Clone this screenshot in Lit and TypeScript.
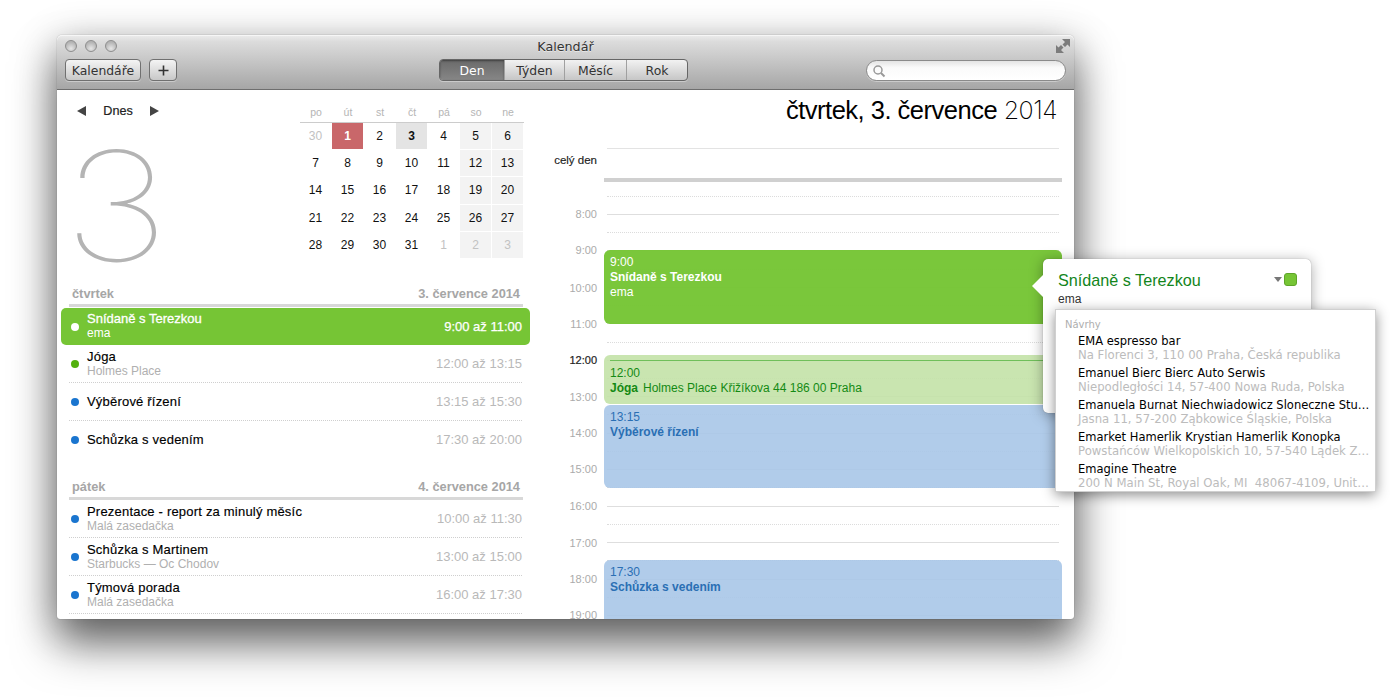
import { LitElement, html, css } from "lit";
import { customElement } from "lit/decorators.js";

const week = ["po", "út", "st", "čt", "pá", "so", "ne"];
const days: [string, string][] = [
  ["30", "out"], ["1", "today"], ["2", ""], ["3", "sel"], ["4", ""], ["5", "we"], ["6", "we"],
  ["7", ""], ["8", ""], ["9", ""], ["10", ""], ["11", ""], ["12", "we"], ["13", "we"],
  ["14", ""], ["15", ""], ["16", ""], ["17", ""], ["18", ""], ["19", "we"], ["20", "we"],
  ["21", ""], ["22", ""], ["23", ""], ["24", ""], ["25", ""], ["26", "we"], ["27", "we"],
  ["28", ""], ["29", ""], ["30", ""], ["31", ""], ["1", "out"], ["2", "we out"], ["3", "we out"],
];

type Row = { t: string; s?: string; time: string; c: string; sel?: boolean; nol?: boolean };
const day1: Row[] = [
  { t: "Snídaně s Terezkou", s: "ema", time: "9:00 až 11:00", c: "w", sel: true },
  { t: "Jóga", s: "Holmes Place", time: "12:00 až 13:15", c: "g" },
  { t: "Výběrové řízení", time: "13:15 až 15:30", c: "b" },
  { t: "Schůzka s vedením", time: "17:30 až 20:00", c: "b", nol: true },
];
const day2: Row[] = [
  { t: "Prezentace - report za minulý měsíc", s: "Malá zasedačka", time: "10:00 až 11:30", c: "b" },
  { t: "Schůzka s Martinem", s: "Starbucks — Oc Chodov", time: "13:00 až 15:00", c: "b" },
  { t: "Týmová porada", s: "Malá zasedačka", time: "16:00 až 17:30", c: "b" },
];

const hourLabels = ["8:00", "9:00", "10:00", "11:00", "12:00", "13:00", "14:00", "15:00", "16:00", "17:00", "18:00", "19:00"];
const labelY = [214, 250, 288, 324, 360, 397, 433, 469, 506, 543, 579, 615];
const TOP = 182;
const PH = 36.45;
const lineY = (h: number) => Math.round(214 + (h - 8) * PH);

const suggestions = [
  ["EMA espresso bar", "Na Florenci 3, 110 00 Praha, Česká republika"],
  ["Emanuel Bierc Bierc Auto Serwis", "Niepodległości 14, 57-400 Nowa Ruda, Polska"],
  ["Emanuela Burnat Niechwiadowicz Sloneczne Stu…", "Jasna 11, 57-200 Ząbkowice Śląskie, Polska"],
  ["Emarket Hamerlik Krystian Hamerlik Konopka", "Powstańców Wielkopolskich 10, 57-540 Lądek Z…"],
  ["Emagine Theatre", "200 N Main St, Royal Oak, MI  48067-4109, Unit…"],
];

@customElement("app-root")
export class AppRoot extends LitElement {
  static styles = css`
    :host { display: block; width: 1390px; height: 698px; padding: 35px 0 0 57px; box-sizing: border-box; background: #fff; overflow: hidden; font-family: "Liberation Sans", Arial, sans-serif; }
    .win { position: relative; width: 1017px; height: 584px; border-radius: 5px 5px 3px 3px; background: #fff; box-shadow: 0 26px 44px rgba(0,0,0,.5), 0 8px 40px rgba(0,0,0,.3), 0 0 1px rgba(0,0,0,.5); display: flex; flex-direction: column; }
    .bar { height: 55px; box-sizing: border-box; flex: none; border-radius: 5px 5px 0 0; background: linear-gradient(#ececec, #dcdcdc 12%, #a6a6a6); border-bottom: 1px solid #6e6e6e; box-shadow: inset 0 1px 0 #f6f6f6; font-family: "DejaVu Sans", sans-serif; color: #333; }
    .tr { height: 24px; position: relative; display: flex; align-items: center; justify-content: center; color: #333; box-sizing: border-box; padding-bottom: 2px; }
    .title { font-size: 12.7px; text-shadow: 0 1px 0 rgba(255,255,255,.5); }
    .lights { position: absolute; left: 8px; top: 5px; display: flex; gap: 8px; }
    .light { width: 12px; height: 12px; border-radius: 50%; box-sizing: border-box; border: 1px solid #8e8e8e; background: radial-gradient(circle at 50% 75%, #e6e6e6, #b4b4b4 70%); }
    .fs { position: absolute; right: 3px; top: 3px; }
    .tools { display: flex; align-items: flex-start; padding-left: 8px; }
    .btn { height: 22px; box-sizing: border-box; border: 1px solid #707070; border-radius: 4px; background: linear-gradient(#f4f4f4, #c8c8c8); box-shadow: 0 1px 0 rgba(255,255,255,.35); display: flex; align-items: center; justify-content: center; font-size: 12.4px; color: #333; }
    .b1 { width: 76px; }
    .b2 { width: 28px; margin-left: 8px; }
    .seg { margin-left: 262px; width: 249px; height: 22px; box-sizing: border-box; border: 1px solid #666; border-radius: 4px; display: flex; background: linear-gradient(#f2f2f2, #c6c6c6); box-shadow: 0 1px 0 rgba(255,255,255,.35); overflow: hidden; }
    .sg { display: flex; align-items: center; justify-content: center; font-size: 12.4px; color: #333; border-left: 1px solid #a0a0a0; box-sizing: border-box; }
    .sg:first-child { border-left: 0; }
    .sg.on { background: linear-gradient(#6a6a6a, #868686); color: #fff; box-shadow: inset 0 1px 2px rgba(0,0,0,.4); }
    .s1 { width: 64px; } .s2 { width: 60px; } .s3 { width: 62px; } .s4 { width: 61px; }
    .search { margin-left: 178px; width: 200px; height: 21px; margin-top: 1px; box-sizing: border-box; border: 1px solid #8a8a8a; border-radius: 11px; background: linear-gradient(#e4e4e4, #fafafa 35%, #fff); display: flex; align-items: center; padding-left: 5px; box-shadow: 0 1px 0 rgba(255,255,255,.35); }

    .main { flex: 1; display: flex; min-height: 0; }
    .left { width: 483px; flex: none; display: flex; flex-direction: column; }
    .top { height: 196px; display: flex; flex: none; }
    .tl { width: 243px; flex: none; }
    .nav { display: flex; align-items: center; height: 12px; margin: 15px 0 0 20px; font-size: 12.6px; color: #222; }
    .nav span { margin: 0 17px 0 17px; width: 30px; text-align: center; -webkit-text-stroke: .2px #222; }
    .big { font-family: Inter, sans-serif; font-weight: 100; font-size: 152px; line-height: 130px; color: #b4b4b4; margin: 24px 0 0 6px; transform: scaleX(1.2); transform-origin: left center; }
    .mini { margin-top: 14px; width: 224px; }
    .mh { display: grid; grid-template-columns: repeat(7, 32px); height: 18px; border-bottom: 1px solid #ccc; }
    .wd { text-align: center; font-size: 10.500px; color: #b5b5b5; line-height: 16px; }
    .mg { display: grid; grid-template-columns: repeat(7, 32px); grid-auto-rows: 27.2px; }
    .d { font-size: 12px; color: #111; display: flex; align-items: center; justify-content: center; margin-right: 1px; margin-bottom: 1px; }
    .d.we { background: #f3f3f3; }
    .d.out { color: #c2c2c2; }
    .d.today { background: #c9676a; color: #fff; font-weight: 700; }
    .d.sel { background: #e4e4e4; font-weight: 700; }

    .ag { padding: 0 0 0 12px; }
    .ah { width: 454px; border-bottom: 3px solid #d8d8d8; display: flex; justify-content: space-between; align-items: flex-end; padding: 0 3px 3px 3px; box-sizing: border-box; font-size: 12.8px; font-weight: 700; color: #a6a6a6; line-height: 14px; height: 21px; }
    .gap { height: 20px; }
    .rows { margin-top: 1px; }
    .rows.r2 { margin-top: 0; }
    .row { height: 38px; box-sizing: border-box; display: grid; grid-template-columns: 18px 1fr auto; align-items: center; width: 453px; border-bottom: 1px dotted #cfcfcf; }
    .row.nol { border-bottom-color: transparent; }
    .row.sel { background: #76c535; border: 0; border-radius: 5px; width: 469px; margin-left: -8px; height: 37px; padding: 0 8px; color: #fff; }
    .sel .tc { margin-top: -2px; }
    .dot { width: 8px; height: 8px; border-radius: 50%; margin-left: 2px; }
    .dot.w { background: #fff; } .dot.g { background: #53b10d; } .dot.b { background: #1a75cf; }
    .t { font-size: 13px; line-height: 15px; color: #000; letter-spacing: .2px; -webkit-text-stroke: .15px #000; }
    .s { font-size: 12px; line-height: 15px; color: #b0b0b0; }
    .tm { font-size: 13px; color: #b9b9b9; }
    .sel .t { color: #fff; -webkit-text-stroke: .3px #fff; letter-spacing: 0; }
    .sel .s { color: #fff; }
    .sel .tm { color: #fff; -webkit-text-stroke: .25px #fff; }

    .right { flex: 1; min-width: 0; display: flex; flex-direction: column; }
    .head { height: 40px; flex: none; text-align: right; padding: 6px 17px 0 0; box-sizing: border-box; font-size: 25.5px; line-height: 28px; color: #000; letter-spacing: -.5px; white-space: nowrap; }
    .head i { font-style: normal; font-family: Inter, sans-serif; font-weight: 200; font-size: 25px; letter-spacing: -.5px; }
    .all { flex: none; margin-top: 18px; height: 30px; position: relative; display: flex; }
    .all label { width: 57px; text-align: right; font-size: 11.500px; color: #222; padding-top: 6px; -webkit-text-stroke: .15px #222; }
    .allline { position: absolute; left: 67px; width: 452px; top: 0; border-top: 1px solid #e3e3e3; }
    .thick { flex: none; margin-left: 64px; width: 458px; height: 4px; background: #d0d0d0; }
    .tg { flex: 1; position: relative; overflow: hidden; border-radius: 0 0 3px 0; }
    .hl { position: absolute; right: 477px; font-size: 11px; line-height: 12px; color: #ababab; }
    .hl.now { color: #222; -webkit-text-stroke: .2px #222; }
    .ln { position: absolute; left: 67px; width: 452px; border-top: 1px solid #dedede; }
    .ln.h { border-top: 1px dotted #dcdcdc; }
    .ev { position: absolute; left: 64px; width: 458px; border-radius: 6px; box-sizing: border-box; padding: 5px 6px; font-size: 12px; line-height: 15px; }
    .ev b { font-weight: 700; }
    .ev.sel { background: rgba(118,197,53,.97); color: #fff; }
    .ev.gr { background: rgba(195,226,167,.9); color: #148a14; }
    .ev.bl { background: rgba(169,199,232,.9); color: #2a6fb4; }
    .nowl { position: absolute; left: 6px; right: 0; top: 5px; border-top: 1px solid #6fbf5a; }
    .ev.gr .tx { padding-top: 6px; }
    .ev.gr em { font-style: normal; margin-left: 5px; }

    .pop { position: absolute; left: 986px; top: 224px; width: 268px; height: 154px; background: #fff; border-radius: 5px; box-shadow: 0 2px 14px rgba(0,0,0,.35), 0 0 1px rgba(0,0,0,.4); }
    .arrow { position: absolute; left: -11px; top: 15px; }
    .pt { position: absolute; left: 15px; top: 11px; font-size: 16.200px; line-height: 20px; color: #13851b; }
    .pe { position: absolute; left: 15px; top: 32px; font-size: 12px; line-height: 16px; color: #333; }
    .pc { position: absolute; left: 231px; top: 18px; width: 0; height: 0; border-left: 4px solid transparent; border-right: 4px solid transparent; border-top: 5px solid #777; }
    .ps { position: absolute; left: 241px; top: 14px; width: 13px; height: 13px; background: #76c535; border: 1px solid #5fa52a; border-radius: 3px; box-sizing: border-box; }
    .menu { position: absolute; left: 12px; top: 50px; width: 321px; height: 183px; background: #fff; box-sizing: border-box; border: 1px solid #d0d0d0; box-shadow: 0 3px 12px rgba(0,0,0,.45); padding: 9px 0 0 9px; font-family: "DejaVu Sans", sans-serif; white-space: nowrap; }
    .mt { font-size: 10px; line-height: 12px; color: #aeaeae; margin-bottom: 3px; }
    .mi { padding-left: 13px; height: 32px; }
    .m1 { font-size: 11.500px; line-height: 14px; color: #000; }
    .m2 { font-size: 11.700px; line-height: 15px; color: #bcbcbc; white-space: pre; }
  `;

  private rows(list: Row[], cls = "") {
    return html`<div class="rows ${cls}">${list.map((r) => html`
      <div class="row ${r.sel ? "sel" : ""} ${r.nol ? "nol" : ""}">
        <div class="dot ${r.c}"></div>
        <div class="tc"><div class="t">${r.t}</div>${r.s ? html`<div class="s">${r.s}</div>` : ""}</div>
        <div class="tm">${r.time}</div>
      </div>`)}</div>`;
  }

  render() {
    const half = [7.5, 8.5, 9.5, 10.5, 11.5, 12.5, 13.5, 14.5, 15.5, 16.5, 17.5, 18.5];
    return html`
      <div class="win">
        <div class="bar">
          <div class="tr">
            <div class="lights"><div class="light"></div><div class="light"></div><div class="light"></div></div>
            <div class="title">Kalendář</div>
            <svg class="fs" width="16" height="16" viewBox="0 0 16 16">
              <path d="M15 1V9L12.500 6.500 10 9 7.500 6.500 10 4 7 1z" fill="#7c7c7c"/>
              <path d="M1 15V7L3.500 9.500 6 7 8.500 9.500 6 12 9 15z" fill="#7c7c7c"/>
            </svg>
          </div>
          <div class="tools">
            <div class="btn b1">Kalendáře</div>
            <div class="btn b2"><svg width="11" height="11" viewBox="0 0 11 11"><path d="M5.500 .5v10M.5 5.500h10" stroke="#333" stroke-width="1.600" fill="none"/></svg></div>
            <div class="seg">
              <div class="sg s1 on">Den</div>
              <div class="sg s2">Týden</div>
              <div class="sg s3">Měsíc</div>
              <div class="sg s4">Rok</div>
            </div>
            <div class="search"><svg width="14" height="14" viewBox="0 0 14 14"><circle cx="6" cy="6" r="4" fill="none" stroke="#999" stroke-width="1.500"/><path d="M9 9l3.500 3.500" stroke="#999" stroke-width="2" fill="none"/></svg></div>
          </div>
        </div>
        <div class="main">
          <div class="left">
            <div class="top">
              <div class="tl">
                <div class="nav">
                  <svg width="9" height="10" viewBox="0 0 9 10"><path d="M0 5l9-5v10z" fill="#444"/></svg>
                  <span>Dnes</span>
                  <svg width="9" height="10" viewBox="0 0 9 10"><path d="M9 5l-9-5v10z" fill="#444"/></svg>
                </div>
                <div class="big">3</div>
              </div>
              <div class="mini">
                <div class="mh">${week.map((w) => html`<div class="wd">${w}</div>`)}</div>
                <div class="mg">${days.map(([n, c]) => html`<div class="d ${c}">${n}</div>`)}</div>
              </div>
            </div>
            <div class="ag">
              <div class="ah"><span>čtvrtek</span><span>3. července 2014</span></div>
              ${this.rows(day1)}
              <div class="gap"></div>
              <div class="ah"><span>pátek</span><span>4. července 2014</span></div>
              ${this.rows(day2, "r2")}
            </div>
          </div>
          <div class="right">
            <div class="head">čtvrtek, 3. července <i>2014</i></div>
            <div class="all"><div class="allline"></div><label>celý den</label></div>
            <div class="thick"></div>
            <div class="tg">
              ${half.map((h) => html`<div class="ln h" style="top:${lineY(h) - TOP}px"></div>`)}
              ${hourLabels.map((_, i) => html`<div class="ln" style="top:${lineY(8 + i) - TOP}px"></div>`)}
              ${hourLabels.map((l, i) => html`<div class="hl ${l === "12:00" ? "now" : ""}" style="top:${labelY[i] - 6 - TOP}px">${l}</div>`)}
              <div class="ev sel" style="top:${250 - TOP}px;height:74px">9:00<br><b>Snídaně s Terezkou</b><br>ema</div>
              <div class="ev gr" style="top:${355 - TOP}px;height:49px"><div class="nowl"></div><div class="tx">12:00<br><b>Jóga</b><em>Holmes Place Křižíkova 44 186 00 Praha</em></div></div>
              <div class="ev bl" style="top:${405 - TOP}px;height:83px">13:15<br><b>Výběrové řízení</b></div>
              <div class="ev bl" style="top:${560 - TOP}px;height:100px">17:30<br><b>Schůzka s vedením</b></div>
            </div>
          </div>
        </div>
        <div class="pop">
          <svg class="arrow" width="12" height="24" viewBox="0 0 12 24"><path d="M12 0L0 12l12 12z" fill="#fff"/></svg>
          <div class="pt">Snídaně s Terezkou</div>
          <div class="pe">ema</div>
          <div class="pc"></div>
          <div class="ps"></div>
          <div class="menu">
            <div class="mt">Návrhy</div>
            ${suggestions.map(([a, b]) => html`<div class="mi"><div class="m1">${a}</div><div class="m2">${b}</div></div>`)}
          </div>
        </div>
      </div>
    `;
  }
}
